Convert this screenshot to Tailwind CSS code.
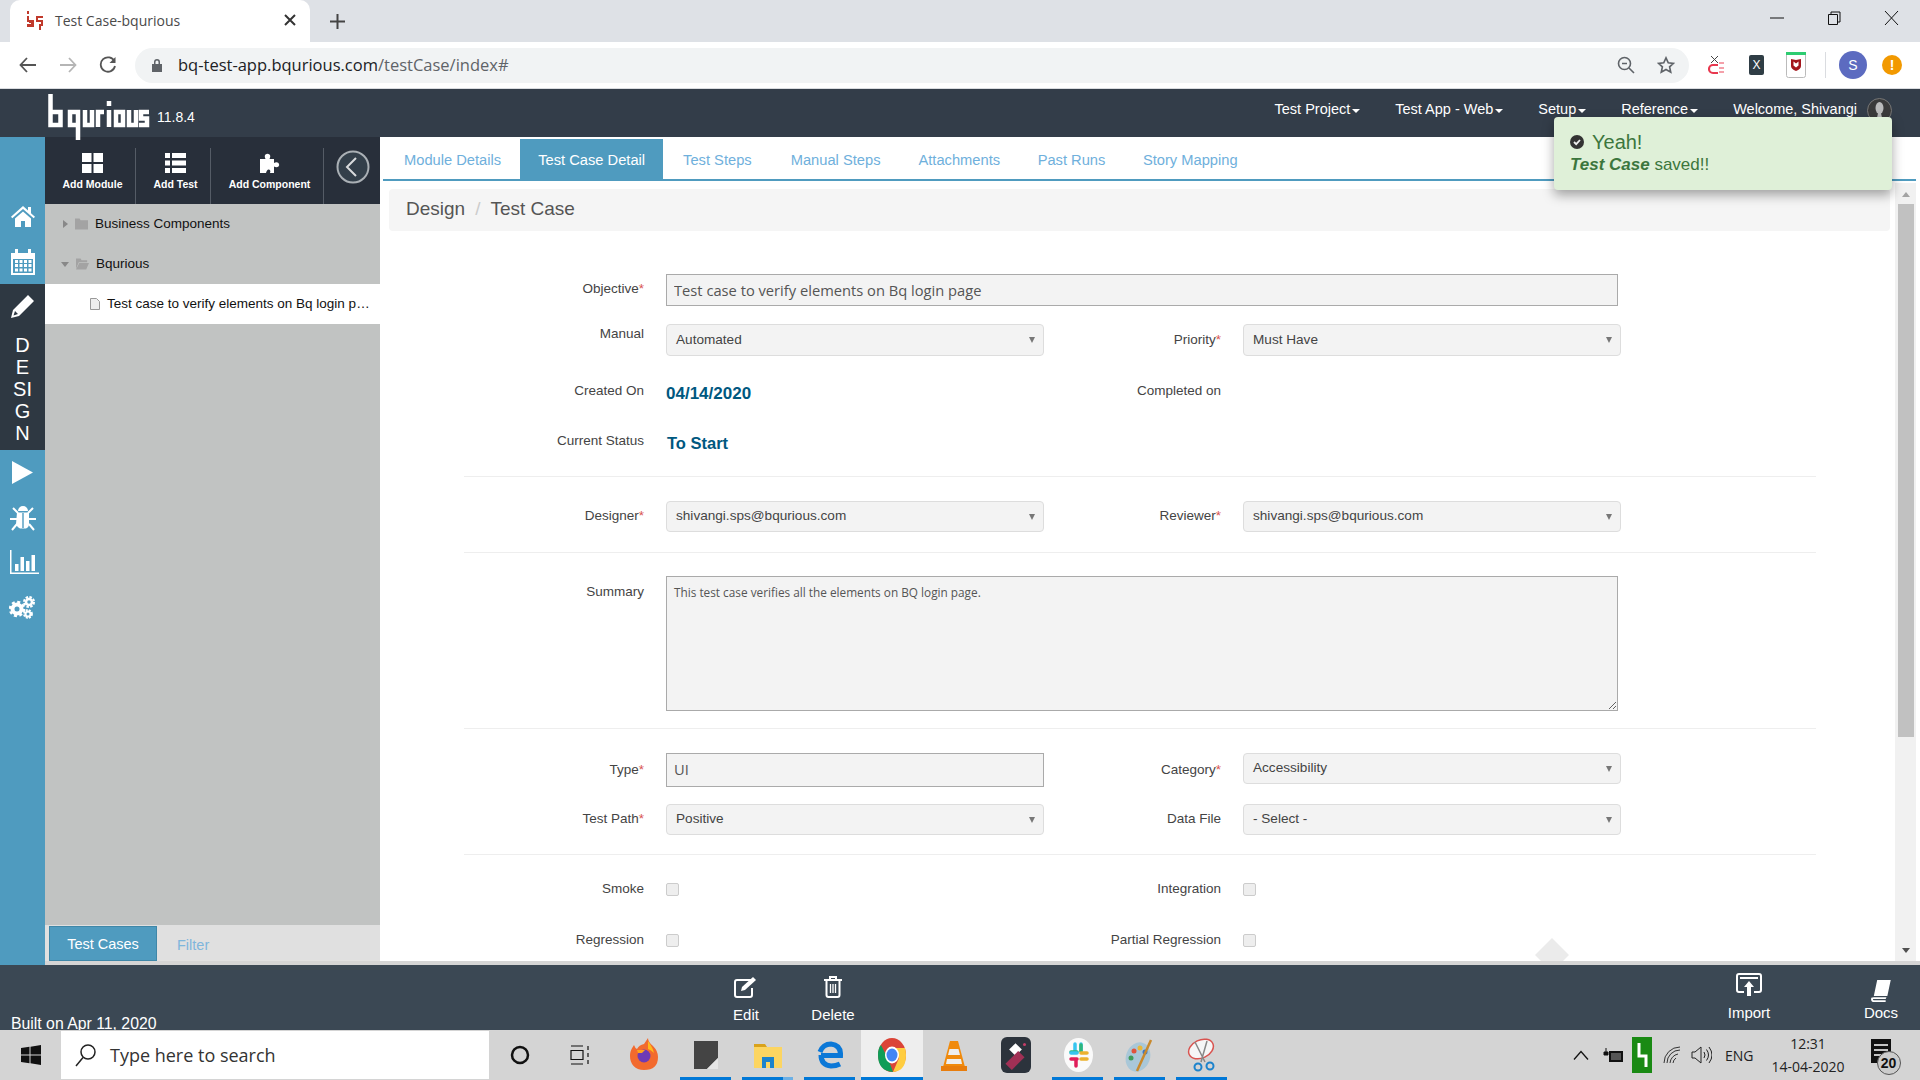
<!DOCTYPE html>
<html lang="en">
  <head>
    <meta charset="UTF-8" />
    <title>Test Case-bqurious</title>
    <script src="https://cdn.jsdelivr.net/npm/@tailwindcss/browser@4"></script>
  </head>
  <body class="overflow-hidden">
    <div class="relative w-[1920px] h-[1080px] flex flex-col overflow-hidden bg-white text-[13.5px] text-[#444] font-['Liberation_Sans',Arial,sans-serif]">
      <!-- browser tab strip -->
      <div class="h-[42px] bg-[#dee1e6] flex items-end relative">
        <div class="ml-[10px] w-[300px] h-[42px] bg-white rounded-t-[10px] flex items-center">
          <svg class="ml-[17px] -mt-[2px]" width="16" height="20" viewBox="0 0 16 20" fill="#c0392b"><path d="M0 1h2v3H0zM0 6h2v4h5v7H0v-3h4v-1H2v-1H0zM9 6h7v2h-5v2h5v6h-2v4h-2v-6h2v-2H9z" /></svg>
          <span class="ml-[12px] -mt-[2px] text-[14px] text-[#4a4a4a] font-['Open_Sans',sans-serif]">Test Case-bqurious</span>
          <svg class="ml-auto mr-[14px] -mt-[2px]" width="12" height="12" viewBox="0 0 12 12" stroke="#333" stroke-width="2"><path d="M1 1l10 10M11 1L1 11" /></svg>
        </div>
        <svg class="ml-[20px] mb-[13px]" width="15" height="15" viewBox="0 0 15 15" stroke="#444" stroke-width="2"><path d="M7.5 0v15M0 7.5h15" /></svg>
        <div class="absolute right-[21px] top-[10px] flex items-center gap-[43px]">
          <svg width="14" height="16" viewBox="0 0 14 16" stroke="#111" stroke-width="1"><path d="M0 8h14" /></svg>
          <svg width="14" height="16" viewBox="0 0 14 16" fill="none" stroke="#111" stroke-width="1"><path d="M1.5 4.5h9v10h-9zM4 4.500V2h9v10h-2.500" /></svg>
          <svg width="15" height="16" viewBox="0 0 15 16" stroke="#111" stroke-width="1"><path d="M1 1l13 14M14 1L1 15" /></svg>
        </div>
      </div>
      <!-- browser toolbar -->
      <div class="h-[47px] bg-white border-b border-[#dadce0] flex items-center shrink-0">
        <svg class="ml-[19px]" width="17" height="16" viewBox="0 0 17 16" fill="none" stroke="#555" stroke-width="1.800"><path d="M17 8H2M8 1L1.500 8 8 15" /></svg>
        <svg class="ml-[24px]" width="17" height="16" viewBox="0 0 17 16" fill="none" stroke="#b5b5b5" stroke-width="1.800"><path d="M0 8h15M9 1l6.500 7L9 15" /></svg>
        <svg class="ml-[22px]" width="18" height="18" viewBox="0 0 18 18" fill="none" stroke="#555" stroke-width="1.800"><path d="M15.500 5.500A7.200 7.200 0 1 0 16 10" /><path d="M16.500 1v6h-6" fill="#555" stroke="none" /></svg>
        <div class="ml-[18px] w-[1554px] h-[35px] rounded-full bg-[#f1f3f4] flex items-center">
          <svg class="ml-[16px]" width="12" height="14" viewBox="0 0 12 14" fill="#5f6368"><path d="M1 6h10v8H1zM3 6V4a3 3 0 0 1 6 0v2H7.500V4a1.500 1.500 0 0 0-3 0v2z" /></svg>
          <span class="ml-[15px] text-[16.500px] text-[#202124] font-['Open_Sans',sans-serif]">bq-test-app.bqurious.com<span class="text-[#5f6368]">/testCase/index#</span></span>
          <svg class="ml-auto" width="18" height="18" viewBox="0 0 18 18" fill="none" stroke="#5f6368" stroke-width="1.600"><circle cx="7.500" cy="7.500" r="6" /><path d="M5 7.500h5M12 12l5 5" /></svg>
          <svg class="ml-[22px] mr-[14px]" width="18" height="18" viewBox="0 0 24 24" fill="none" stroke="#5f6368" stroke-width="2.200"><path d="M12 2.500l3 6.500 7 .8-5.200 4.700 1.500 7-6.300-3.600-6.300 3.600 1.500-7L2 9.800l7-.8z" /></svg>
        </div>
        <svg class="ml-[19px]" width="16" height="20" viewBox="0 0 16 20"><path d="M3 1l7 7M10 1L3 8" stroke="#444" stroke-width="1" /><path d="M10 10H5a3.500 3.500 0 0 0 0 8h5" fill="none" stroke="#e8384f" stroke-width="2.200" /><path d="M11 7h5v2h-5zM11 12h5v2h-5zM11 16h5v2h-5z" fill="#f4a0aa" /></svg>
        <div class="ml-[25px] w-[15px] h-[20px] rounded-[2px] bg-[#2f3d45] text-white text-[12px] leading-[20px] text-center">X</div>
        <svg class="ml-[22px]" width="20" height="26" viewBox="0 0 20 26"><rect x=".5" y=".5" width="19" height="25" rx="2" fill="#fff" stroke="#bbb" /><rect width="20" height="3" fill="#2ecc71" /><path d="M5 7l5 1 5-1v7q0 3-5 5-5-2-5-5z" fill="#a3161d" /><path d="M7.500 9.500l2.500 2 2.500-2v4l-2.500 2-2.500-2z" fill="#fff" /></svg>
        <div class="ml-[19px] w-px h-[26px] bg-[#dadce0]"></div>
        <div class="ml-[13px] w-[28px] h-[28px] rounded-full bg-[#5c6bc0] text-white text-[14px] leading-[28px] text-center">S</div>
        <div class="ml-[15px] w-[20px] h-[20px] rounded-full bg-[#f29900] text-white text-[14px] font-bold leading-[20px] text-center">!</div>
      </div>
      <!-- app header -->
      <div class="h-[48px] shrink-0 bg-[#333d49] flex text-white relative z-10">
        <svg class="ml-[48px] mt-[5px] overflow-visible" width="101" height="46" viewBox="0 0 101 46" fill="none" stroke="#fff" stroke-width="4.500">
          <path d="M2.500 0v31h10V18H4" />
          <path d="M22 18h8v13h-8zM30 31v15" />
          <path d="M37 16v15h7V16" />
          <path d="M50 33V18h6" />
          <path d="M61 16v17M61 7v5" />
          <path d="M68 18h7v13h-7z" />
          <path d="M81 16v15h7V16" />
          <path d="M101 18h-8v6.500h6V31h-8" />
        </svg>
        <span class="ml-[8px] mt-[19px] h-[18px] leading-[18px] text-[14px]">11.8.4</span>
        <div class="ml-auto mr-[28px] flex items-center h-[42px] text-[14.500px] text-white">
          <span>Test Project</span><i class="ml-[2px] mr-[35px] mt-[1px] border-x-[4px] border-x-transparent border-t-[4px] border-t-white"></i>
          <span>Test App - Web</span><i class="ml-[2px] mr-[35px] mt-[1px] border-x-[4px] border-x-transparent border-t-[4px] border-t-white"></i>
          <span>Setup</span><i class="ml-[2px] mr-[35px] mt-[1px] border-x-[4px] border-x-transparent border-t-[4px] border-t-white"></i>
          <span>Reference</span><i class="ml-[2px] mr-[35px] mt-[1px] border-x-[4px] border-x-transparent border-t-[4px] border-t-white"></i>
          <span>Welcome, Shivangi</span>
          <svg class="ml-[10px]" width="25" height="25" viewBox="0 0 25 25"><circle cx="12.500" cy="12.500" r="12" fill="#3a3a3a" stroke="#777" /><ellipse cx="12.500" cy="10" rx="4" ry="6" fill="#bbb" /><path d="M9 25l2-10h3l2 10z" fill="#bbb" /></svg>
        </div>
      </div>
      <!-- middle -->
      <div class="h-[828px] shrink-0 flex">
        <!-- rail -->
        <div class="w-[45px] shrink-0 bg-[#4f9bbf] flex flex-col text-white">
          <div class="h-[147px] shrink-0 pt-[57px] flex flex-col">
            <div class="h-[45px] flex items-center justify-center">
              <svg width="24" height="21" viewBox="0 0 24 21" fill="#fff"><path d="M12 0l5 4.500V1h3v6.200l4 3.600-1.300 1.400L12 3 1.300 12.200 0 10.800zM4 12.500l8-7 8 7V21h-6v-6h-4v6H4z" /></svg>
            </div>
            <div class="h-[45px] flex items-center justify-center">
              <svg width="24" height="26" viewBox="0 0 24 26" fill="#fff"><path d="M0 4h4V0h3v4h10V0h3v4h4v22H0zM2 10v14h20V10z" /><path d="M4 11h3v3H4zM8.500 11h3v3h-3zM13 11h3v3h-3zM17.500 11h3v3h-3zM4 15h3v3H4zM8.500 15h3v3h-3zM13 15h3v3h-3zM17.500 15h3v3h-3zM4 19.500h3v3H4zM8.500 19.500h3v3h-3zM13 19.500h3v3h-3zM17.500 19.500h3v3h-3z" /></svg>
            </div>
          </div>
          <div class="h-[166px] shrink-0 bg-[#2e3842] flex flex-col items-center pt-[10px]">
            <svg width="24" height="24" viewBox="0 0 24 24" fill="#fff"><path d="M17 1l6 6L8 22l-8 2 2-8zM4 17l-1.500 4.500L7 20z" /></svg>
            <div class="mt-[16px] text-[20px] leading-[22px] text-center">D<br />E<br />SI<br />G<br />N</div>
          </div>
          <div class="h-[45px] flex items-center justify-center">
            <svg width="21" height="23" viewBox="0 0 21 23" fill="#fff"><path d="M0 0l21 11.500L0 23z" /></svg>
          </div>
          <div class="h-[45px] flex items-center justify-center">
            <svg width="26" height="26" viewBox="0 0 26 26" fill="#fff"><path d="M8 6a5 5 0 0 1 10 0zM7 7.500h12V19q0 3-3 4.500h-6q-3-1.500-4-4.500zM12.300 8v15h1.400V8z" fill-rule="evenodd" /><path d="M3 3l5 5M23 3l-5 5M0 14h7M26 14h-7M2 25l5-6M24 25l-5-6" stroke="#fff" stroke-width="2" /></svg>
          </div>
          <div class="h-[45px] flex items-center justify-center pl-[2px] pb-[2px]">
            <svg width="30" height="24" viewBox="0 0 30 24" fill="#fff"><path d="M1 0h1.500v22.500H30V24H1z" /><path d="M6 14h3.500v7H6zM11.500 7h3.500v14h-3.500zM17 11h3.500v10H17zM22.500 5H26v16h-3.500z" /></svg>
          </div>
          <div class="h-[45px] flex items-center justify-center pb-[2px]">
            <svg width="27" height="24" viewBox="0 0 27 24" fill="none" stroke="#fff"><circle cx="8" cy="14" r="4.500" stroke-width="4" /><circle cx="8" cy="14" r="7" stroke-width="2.500" stroke-dasharray="3 2.500" /><circle cx="20" cy="7" r="3" stroke-width="2.500" /><circle cx="20" cy="7" r="5" stroke-width="2" stroke-dasharray="2.500 1.400" /><circle cx="19" cy="19" r="2.500" stroke-width="2" /><circle cx="19" cy="19" r="4" stroke-width="1.800" stroke-dasharray="2 1.200" /></svg>
          </div>
        </div>
        <!-- tree sidebar -->
        <div class="w-[335px] shrink-0 flex flex-col bg-[#c1c3c2]">
          <div class="h-[67px] shrink-0 bg-[#282f3a] flex items-end text-white text-[10.500px] font-bold">
            <div class="w-[91px] h-[56px] border-r border-[#555c66] pl-[5px] flex flex-col items-center">
              <svg class="mt-[5px]" width="21" height="20" viewBox="0 0 21 20" fill="#fff"><path d="M0 0h9.500v9H0zM11.500 0H21v9h-9.500zM0 11h9.500v9H0zM11.500 11H21v9h-9.500z" /></svg>
              <span class="mt-[4px] leading-[14px]">Add Module</span>
            </div>
            <div class="w-[75px] h-[56px] border-r border-[#555c66] pl-[5px] flex flex-col items-center">
              <svg class="mt-[5px]" width="21" height="20" viewBox="0 0 21 20" fill="#fff"><path d="M0 0h5v5H0zM7 0h14v5H7zM0 7.500h5v5H0zM7 7.500h14v5H7zM0 15h5v5H0zM7 15h14v5H7z" /></svg>
              <span class="mt-[4px] leading-[14px]">Add Test</span>
            </div>
            <div class="w-[113px] h-[56px] border-r border-[#555c66] pl-[5px] flex flex-col items-center">
              <svg class="mt-[5px]" width="20" height="20" viewBox="0 0 20 20" fill="#fff"><path d="M0 6h5.500Q4 3 5.500 1.500q2-1.500 4 0Q11 3 9.500 6H14v4q2.500-1.500 4.500 0 1.500 2 0 3.500-2 1.500-4.500 0V20h-4q1-3-1-3.500-2-.5-3 3.500H0z" /></svg>
              <span class="mt-[4px] leading-[14px]">Add Component</span>
            </div>
            <div class="flex-1 h-[67px] flex items-center justify-center pl-[2px] pb-[8px]">
              <svg width="34" height="34" viewBox="0 0 34 34" fill="#333f4a" stroke="#aab0b5" stroke-width="2"><circle cx="17" cy="17" r="15.500" /><path d="M20 8l-9 9 9 9" fill="none" stroke="#d8dadc" /></svg>
            </div>
          </div>
          <div class="h-[40px] shrink-0 flex items-center pl-[18px] text-[#111]">
            <i class="border-y-[4px] border-y-transparent border-l-[5px] border-l-[#888]"></i>
            <svg class="ml-[7px]" width="13" height="12" viewBox="0 0 14 12" fill="#a3a3a3"><path d="M0 0h5l1 2h8v10H0z" /></svg>
            <span class="ml-[7px]">Business Components</span>
          </div>
          <div class="h-[40px] shrink-0 flex items-center pl-[16px] text-[#111]">
            <i class="border-x-[4px] border-x-transparent border-t-[5px] border-t-[#888]"></i>
            <svg class="ml-[7px]" width="13" height="12" viewBox="0 0 14 12" fill="#a3a3a3"><path d="M0 0h5l1 2h6v2H3L0 11zM3.500 5H14l-3 7H0z" /></svg>
            <span class="ml-[7px]">Bqurious</span>
          </div>
          <div class="h-[40px] shrink-0 bg-white flex items-center pl-[45px] text-[#111]">
            <svg class="shrink-0" width="10" height="12" viewBox="0 0 10 12" fill="#eee" stroke="#999"><path d="M.500.500h6l3 3v8h-9z" /></svg>
            <span class="ml-[7px] whitespace-nowrap">Test case to verify elements on Bq login p…</span>
          </div>
          <div class="flex-1"></div>
          <div class="h-[36px] shrink-0 bg-[#e0e0e0] flex items-end pl-[4px] text-[14.500px]">
            <div class="w-[108px] h-[35px] pt-[2px] bg-[#4f9bbf] border border-[#3f87a8] text-white flex items-center justify-center">Test Cases</div>
            <span class="ml-[20px] h-[35px] leading-[38px] text-[#7fb6dc]">Filter</span>
          </div>
          <div class="h-[4px] shrink-0 bg-[#d5d5d5]"></div>
        </div>
        <!-- main -->
        <div class="flex-1 min-w-0 flex flex-col">
          <div class="h-[44px] shrink-0 flex items-end ml-[3px] border-b-[2px] border-[#4f9bbf] pl-[2px] mr-[4px] text-[14.700px] text-[#6fb0dc]">
            <span class="h-[38px] px-[19px] leading-[38px]">Module Details</span>
            <span class="h-[40px] px-[18px] leading-[42px] bg-[#4f9bbf] text-white">Test Case Detail</span>
            <span class="h-[38px] px-[20px] leading-[38px]">Test Steps</span>
            <span class="h-[38px] px-[19px] leading-[38px]">Manual Steps</span>
            <span class="h-[38px] px-[19px] leading-[38px]">Attachments</span>
            <span class="h-[38px] px-[18.500px] leading-[38px]">Past Runs</span>
            <span class="h-[38px] px-[19px] leading-[38px]">Story Mapping</span>
          </div>
          <div class="h-[780px] shrink-0 flex relative overflow-hidden">
            <div class="w-[1515px] shrink-0 pt-[8px]">
              <div class="ml-[9px] mr-[5px] h-[42px] rounded-[4px] bg-[#f5f5f5] flex items-center pl-[17px] pb-[2px] text-[19px] text-[#555]">
                <span>Design</span><span class="mx-[10px] text-[#ccc]">/</span><span>Test Case</span>
              </div>
              <form class="ml-[84px] w-[1352px] pt-[43px]">
                <div class="h-[32px] flex items-center">
                  <label class="w-[180px] text-right -mt-[1px]">Objective<span class="text-[#d9534f]">*</span></label>
                  <input class="ml-[22px] w-[952px] h-[32px] border border-[#aaa] bg-[#f3f3f3] px-[7px] text-[14.700px] text-[#555] font-['Open_Sans',sans-serif]" value="Test case to verify elements on Bq login page" />
                </div>
                <div class="mt-[18px] h-[32px] flex items-center">
                  <label class="w-[180px] text-right -mt-[11px]">Manual</label>
                  <div class="ml-[22px] w-[378px] h-[32px] rounded-[4px] border border-[#ddd] bg-[#f3f3f3] flex items-center justify-between pl-[9px] pr-[8px] text-[13.600px] text-[#444]">Automated<i class="border-x-[3.500px] border-x-transparent border-t-[6px] border-t-[#777]"></i></div>
                  <label class="w-[177px] text-right">Priority<span class="text-[#d9534f]">*</span></label>
                  <div class="ml-[22px] w-[378px] h-[32px] rounded-[4px] border border-[#ddd] bg-[#f3f3f3] flex items-center justify-between pl-[9px] pr-[8px] text-[13.600px] text-[#444]">Must Have<i class="border-x-[3.500px] border-x-transparent border-t-[6px] border-t-[#777]"></i></div>
                </div>
                <div class="mt-[19px] h-[32px] flex items-center">
                  <label class="w-[180px] text-right mt-[1px]">Created On</label>
                  <span class="ml-[22px] w-[378px] text-[17px] font-bold text-[#00587f] mt-[5px]">04/14/2020</span>
                  <label class="w-[177px] text-right mt-[1px]">Completed on</label>
                </div>
                <div class="mt-[18px] h-[32px] flex items-center">
                  <label class="w-[180px] text-right mt-[1px]">Current Status</label>
                  <span class="ml-[23px] text-[16.500px] font-bold text-[#00587f] mt-[5px]">To Start</span>
                </div>
                <hr class="mt-[19px] border-[#eee]" />
                <div class="mt-[24px] h-[31px] flex items-center">
                  <label class="w-[180px] text-right">Designer<span class="text-[#d9534f]">*</span></label>
                  <div class="ml-[22px] w-[378px] h-[31px] rounded-[4px] border border-[#ddd] bg-[#f3f3f3] flex items-center justify-between pl-[9px] pr-[8px] text-[13.600px] text-[#444]">shivangi.sps@bqurious.com<i class="border-x-[3.500px] border-x-transparent border-t-[6px] border-t-[#777]"></i></div>
                  <label class="w-[177px] text-right">Reviewer<span class="text-[#d9534f]">*</span></label>
                  <div class="ml-[22px] w-[378px] h-[31px] rounded-[4px] border border-[#ddd] bg-[#f3f3f3] flex items-center justify-between pl-[9px] pr-[8px] text-[13.600px] text-[#444]">shivangi.sps@bqurious.com<i class="border-x-[3.500px] border-x-transparent border-t-[6px] border-t-[#777]"></i></div>
                </div>
                <hr class="mt-[20px] border-[#eee]" />
                <div class="mt-[23px] h-[135px] flex items-start">
                  <label class="w-[180px] text-right mt-[6px]">Summary</label>
                  <textarea class="block ml-[22px] w-[952px] h-[135px] border border-[#aaa] bg-[#f3f3f3] px-[7px] py-[7px] text-[11.800px] text-[#555] font-['Open_Sans',sans-serif]">This test case verifies all the elements on BQ login page.</textarea>
                </div>
                <hr class="mt-[17px] border-[#eee]" />
                <div class="mt-[24px] h-[34px] flex items-center">
                  <label class="w-[180px] text-right">Type<span class="text-[#d9534f]">*</span></label>
                  <input class="ml-[22px] w-[378px] h-[34px] border border-[#aaa] bg-[#f3f3f3] px-[7px] pb-[2px] text-[14.700px] text-[#555] font-['Open_Sans',sans-serif]" value="UI" />
                  <label class="w-[177px] text-right">Category<span class="text-[#d9534f]">*</span></label>
                  <div class="ml-[22px] w-[378px] h-[31px] self-start rounded-[4px] border border-[#ddd] bg-[#f3f3f3] flex items-center justify-between pl-[9px] pr-[8px] text-[13.600px] text-[#444]">Accessibility<i class="border-x-[3.500px] border-x-transparent border-t-[6px] border-t-[#777]"></i></div>
                </div>
                <div class="mt-[17px] h-[31px] flex items-center">
                  <label class="w-[180px] text-right">Test Path<span class="text-[#d9534f]">*</span></label>
                  <div class="ml-[22px] w-[378px] h-[31px] rounded-[4px] border border-[#ddd] bg-[#f3f3f3] flex items-center justify-between pl-[9px] pr-[8px] text-[13.600px] text-[#444]">Positive<i class="border-x-[3.500px] border-x-transparent border-t-[6px] border-t-[#777]"></i></div>
                  <label class="w-[177px] text-right">Data File</label>
                  <div class="ml-[22px] w-[378px] h-[31px] rounded-[4px] border border-[#ddd] bg-[#f3f3f3] flex items-center justify-between pl-[9px] pr-[8px] text-[13.600px] text-[#444]">- Select -<i class="border-x-[3.500px] border-x-transparent border-t-[6px] border-t-[#777]"></i></div>
                </div>
                <hr class="mt-[19px] border-[#eee]" />
                <div class="mt-[19px] h-[30px] flex items-center">
                  <label class="w-[180px] text-right">Smoke</label>
                  <span class="ml-[22px] w-[13px] h-[13px] rounded-[2px] border border-[#ccc] bg-[#eee]"></span>
                  <label class="ml-[365px] w-[177px] text-right">Integration</label>
                  <span class="ml-[22px] w-[13px] h-[13px] rounded-[2px] border border-[#ccc] bg-[#eee]"></span>
                </div>
                <div class="mt-[21px] h-[30px] flex items-center">
                  <label class="w-[180px] text-right">Regression</label>
                  <span class="ml-[22px] w-[13px] h-[13px] rounded-[2px] border border-[#ccc] bg-[#eee]"></span>
                  <label class="ml-[365px] w-[177px] text-right">Partial Regression</label>
                  <span class="ml-[22px] w-[13px] h-[13px] rounded-[2px] border border-[#ccc] bg-[#eee]"></span>
                </div>
              </form>
              <div class="absolute left-[1160px] top-[762px] w-[24px] h-[24px] rotate-45 bg-[#ebebeb]"></div>
            </div>
            <!-- scrollbar -->
            <div class="w-[21px] mt-[2px] shrink-0 bg-[#f1f1f1] flex flex-col items-center">
              <i class="mt-[9px] border-x-[4.500px] border-x-transparent border-b-[5px] border-b-[#a3a3a3]"></i>
              <div class="mt-[7px] w-[16px] h-[533px] bg-[#c1c1c1]"></div>
              <i class="mt-auto mb-[8px] border-x-[4.500px] border-x-transparent border-t-[5px] border-t-[#505050]"></i>
            </div>
          </div>
          <div class="h-[4px] shrink-0 bg-[#d5d5d5]"></div>
        </div>
      </div>
      <!-- app footer -->
      <div class="h-[65px] shrink-0 bg-[#3b4854] flex text-white text-[15px]">
        <span class="ml-[11px] mt-[50px] leading-[18px] w-[144px] text-[15.800px] whitespace-nowrap">Built on Apr 11, 2020</span>
        <div class="ml-[561px] w-[60px] flex flex-col items-center pt-[11px]">
          <svg width="26" height="22" viewBox="0 0 26 22" fill="none" stroke="#fff" stroke-width="2"><path d="M18 4H4Q2 4 2 6v13q0 2 2 2h13q2 0 2-2v-7" /><path d="M8 15l1-4L20 1l3 3-11 10z" fill="#fff" stroke="none" /></svg>
          <span class="mt-[8px] leading-[18px]">Edit</span>
        </div>
        <div class="ml-[27px] w-[60px] flex flex-col items-center pt-[10px]">
          <svg width="20" height="23" viewBox="0 0 20 23" fill="none" stroke="#fff" stroke-width="2"><path d="M1 5h18M7 5V2h6v3M3.500 5v15q0 2 2 2h9q2 0 2-2V5" /><path d="M7.500 9v9M10 9v9M12.500 9v9" stroke-width="1.300" /></svg>
          <span class="mt-[8px] leading-[18px]">Delete</span>
        </div>
        <div class="ml-[856px] w-[60px] flex flex-col items-center pt-[8px]">
          <svg width="26" height="24" viewBox="0 0 26 24" fill="none" stroke="#fff" stroke-width="2"><path d="M8 19H3q-2 0-2-2V3q0-2 2-2h20q2 0 2 2v14q0 2-2 2h-5" /><path d="M4 5h18" /><path d="M13 8l5 6h-3v9h-4v-9H8z" fill="#fff" stroke="none" /></svg>
          <span class="mt-[7px] leading-[18px]">Import</span>
        </div>
        <div class="ml-[72px] w-[60px] flex flex-col items-center pt-[15px]">
          <svg width="22" height="22" viewBox="0 0 23 26" fill="#fff"><path d="M7 0h16l-4 19H3zM3 20.500h15l-1 2H2q0 1.500 1 1.500h14v2H2q-3-1-2-5z" /></svg>
          <span class="mt-[2px] leading-[18px]">Docs</span>
        </div>
      </div>
      <!-- windows taskbar -->
      <div class="h-[50px] shrink-0 bg-[#d4d4d4] flex items-stretch">
        <div class="w-[61px] flex items-center justify-center">
          <svg width="20" height="20" viewBox="0 0 20 20" fill="#111"><path d="M0 3l8.500-1.200V9.500H0zM9.500 1.700L20 0v9.500H9.500zM0 10.500h8.500v7.700L0 17zM9.500 10.500H20V20L9.500 18.300z" /></svg>
        </div>
        <div class="w-[428px] my-[1px] bg-white flex items-center">
          <svg class="ml-[14px]" width="21" height="23" viewBox="0 0 21 23" fill="none" stroke="#222" stroke-width="1.500"><circle cx="13" cy="8" r="7" /><path d="M8 13.500L1 22" /></svg>
          <span class="ml-[14px] text-[18px] text-[#333] font-['Open_Sans',sans-serif]">Type here to search</span>
        </div>
        <div class="w-[62px] flex items-center justify-center">
          <svg width="20" height="20" viewBox="0 0 20 20" fill="none" stroke="#111" stroke-width="2.500"><circle cx="10" cy="10" r="8" /></svg>
        </div>
        <div class="w-[62px] flex items-center justify-center pr-[5px]">
          <svg width="20" height="20" viewBox="0 0 20 20" fill="none" stroke="#111" stroke-width="1.200"><path d="M1 1h12M1 19h12M1 5.500h12v9H1zM18 1v4M18 8v4M18 15v4" /></svg>
        </div>
        <div class="w-[62px] flex items-center justify-center border-b-[3px] border-transparent">
          <svg width="28" height="32" viewBox="0 0 28 32"><path d="M14 32C5 32 0 26 0 18 0 12 3 9 4 7q1 3 3 4 2-4 7-5l4-6q0 4 5 8 5 5 5 11 0 13-14 13z" fill="#f26a2e" /><path d="M18 3q5 7 6 12-3-3-6-4z" fill="#ffb91a" /><circle cx="14" cy="18" r="6.500" fill="#6e3bb5" /><path d="M7 12h8l-3 3H8z" fill="#ffa31a" /></svg>
        </div>
        <div class="relative w-[62px] flex items-center justify-center">
          <svg width="24" height="28" viewBox="0 0 24 28"><path d="M0 0h24v17l-11 11H0z" fill="#444" /><path d="M24 17v11H13z" fill="#e5e5e5" /></svg>
          <div class="absolute left-[5px] bottom-0 w-[51px] h-[3px] bg-[#0078d7]"></div>
        </div>
        <div class="relative w-[62px] flex items-center justify-center">
          <svg width="28" height="26" viewBox="0 0 28 26"><path d="M0 2h11l2 3H0z" fill="#d9a21b" /><path d="M0 5h28v21H0z" fill="#fcd561" /><path d="M8 26V15h12v11h-4v-6h-4v6z" fill="#1c83cc" /></svg>
          <div class="absolute left-[5px] bottom-0 w-[41px] h-[3px] bg-[#0078d7]"></div>
          <div class="absolute left-[46px] bottom-0 w-[10px] h-[3px] bg-[#6cb0e5]"></div>
        </div>
        <div class="relative w-[62px] flex items-center justify-center">
          <svg width="26" height="28" viewBox="0 0 26 28" fill="none" stroke="#0b78d7" stroke-width="5"><path d="M4 14.500h19.500Q24 4 14 3 6 3 3 11M4 14q0 10 10 11 5 0 9-2" /></svg>
          <div class="absolute left-[5px] bottom-0 w-[51px] h-[3px] bg-[#0078d7]"></div>
        </div>
        <div class="relative w-[62px] flex items-center justify-center bg-[#eeeeee]">
          <svg width="28" height="34" viewBox="0 0 28 34"><ellipse cx="14" cy="17" rx="14" ry="17" fill="#db4437" /><path d="M0 17q0-7 3-10l8 16 4 11q-15-1-15-17z" fill="#0f9d58" /><path d="M14 10h13q1 3 1 7 0 16-13 17l6-14z" fill="#ffcd40" /><ellipse cx="14" cy="17" rx="7" ry="8.500" fill="#fff" /><ellipse cx="14" cy="17" rx="5.500" ry="6.500" fill="#4285f4" /></svg>
          <div class="absolute left-0 bottom-0 w-[62px] h-[3px] bg-[#0078d7]"></div>
        </div>
        <div class="w-[62px] flex items-center justify-center">
          <svg width="26" height="32" viewBox="0 0 26 32"><path d="M9 2h8l7 26H2z" fill="#f08a0c" /><path d="M8.500 10h9l1.500 6H7zM6 20h14l1 5H5z" fill="#eee" /><path d="M0 27h26v5H0z" fill="#e87d0d" /></svg>
        </div>
        <div class="w-[62px] flex items-center justify-center">
          <div class="relative w-[30px] h-[36px] rounded-[6px] bg-[#2c333c] overflow-hidden">
            <div class="absolute left-[10px] top-[8px] w-[9px] h-[9px] rotate-45 bg-white"></div>
            <div class="absolute left-[5px] top-[19px] w-[18px] h-[9px] -rotate-45 bg-[#a03055]"></div>
            <div class="absolute left-[22px] top-[6px] w-[3px] h-[3px] rounded-full bg-[#c53d68]"></div>
          </div>
        </div>
        <div class="relative w-[62px] flex items-center justify-center">
          <svg width="29" height="34" viewBox="0 0 29 34"><ellipse cx="14.500" cy="17" rx="14.500" ry="17" fill="#fafafa" /><path d="M11 6v7M17 6v7" stroke="#36c5f0" stroke-width="3.500" stroke-linecap="round" /><path d="M17 7v6M7 14h6" stroke="#2eb67d" stroke-width="3.500" stroke-linecap="round" /><path d="M7 15h6" stroke="#36c5f0" stroke-width="3.500" stroke-linecap="round" /><path d="M17 15h6M17 21h6" stroke="#ecb22e" stroke-width="3.500" stroke-linecap="round" /><path d="M7 21h6M12 21v7" stroke="#e01e5a" stroke-width="3.500" stroke-linecap="round" /></svg>
          <div class="absolute left-[5px] bottom-0 w-[51px] h-[3px] bg-[#0078d7]"></div>
        </div>
        <div class="relative w-[62px] flex items-center justify-center">
          <svg width="30" height="36" viewBox="0 0 30 36"><ellipse cx="13" cy="20" rx="12" ry="15" fill="#a9c7d8" transform="rotate(20 13 20)" /><circle cx="9" cy="14" r="2.500" fill="#e1533c" /><circle cx="15" cy="11" r="2.500" fill="#e8b73a" /><circle cx="6" cy="21" r="2.500" fill="#3f9c59" /><circle cx="20" cy="15" r="2.500" fill="#3b79c7" /><path d="M26 3L12 34" stroke="#c9892c" stroke-width="2.500" /></svg>
          <div class="absolute left-[5px] bottom-0 w-[51px] h-[3px] bg-[#0078d7]"></div>
        </div>
        <div class="relative w-[62px] flex items-center justify-center">
          <svg width="30" height="36" viewBox="0 0 30 36" fill="none"><ellipse cx="14" cy="12" rx="13" ry="9" stroke="#d9534f" stroke-width="1.500" transform="rotate(-25 14 12)" fill="#f6f6f6" /><path d="M8 5l10 20M20 4L14 25" stroke="#888" stroke-width="1.500" /><circle cx="11" cy="30" r="3.500" stroke="#1c83cc" stroke-width="2" /><circle cx="23" cy="29" r="3.500" stroke="#1c83cc" stroke-width="2" /></svg>
          <div class="absolute left-[5px] bottom-0 w-[51px] h-[3px] bg-[#0078d7]"></div>
        </div>
        <!-- tray -->
        <div class="ml-[340px] flex items-center">
          <svg width="16" height="10" viewBox="0 0 16 10" fill="none" stroke="#111" stroke-width="1.300"><path d="M1 9.500l7-8 7 8" /></svg>
          <svg class="ml-[14px]" width="20" height="15" viewBox="0 0 20 15"><path d="M3 0v4M1 4h4v3H1z" stroke="#111" fill="#111" /><path d="M6 3h14v11H6z" fill="#111" /><path d="M8 5h10v7H8z" fill="#555" /></svg>
          <div class="ml-[9px] w-[20px] h-[36px] bg-[#1a8a14] flex items-center justify-center">
            <svg width="12" height="24" viewBox="0 0 12 24" fill="none" stroke="#fff" stroke-width="3"><path d="M3 0v13h7v11" /></svg>
          </div>
          <svg class="ml-[11px]" width="18" height="18" viewBox="0 0 18 18" fill="none" stroke="#333" stroke-width="1"><path d="M1 17A16 16 0 0 1 17 1M4 17A13 13 0 0 1 17 4M7 17A10 10 0 0 1 15 8M10 17a7 7 0 0 1 3-5" /></svg>
          <svg class="ml-[10px]" width="21" height="20" viewBox="0 0 21 20" fill="none" stroke="#222" stroke-width="1"><path d="M1 7h3l6-5v16l-6-5H1zM13 7q2 3 0 6M15.500 4.500q4 5.500 0 11M18 2q6 8 0 16" /></svg>
          <span class="ml-[13px] text-[14px] text-[#222] font-['Open_Sans',sans-serif]">ENG</span>
          <div class="ml-[17px] w-[75px] text-center text-[14px] leading-[23px] text-[#222] font-['Open_Sans',sans-serif]">12:31<br />14-04-2020</div>
          <div class="relative ml-[25px] w-[24px] h-[26px] -mt-[6px]">
            <svg width="20" height="26" viewBox="0 0 20 26"><path d="M0 0h20v24H0z" fill="#111" /><path d="M3 6h14M3 11h14M3 16h10" stroke="#fff" stroke-width="1.500" /></svg>
            <div class="absolute left-[6px] top-[12px] w-[24px] h-[24px] rounded-full border border-[#555] bg-[#ccc] text-[14px] font-bold leading-[22px] text-center text-[#111]">20</div>
          </div>
        </div>
      </div>
      <!-- toast -->
      <div class="absolute left-[1554px] top-[117px] w-[338px] h-[73px] rounded-[4px] bg-[#dff0d8] shadow-[0_5px_12px_rgba(0,0,0,0.35)] z-20 pl-[16px] text-[#3c763d]">
        <div class="flex items-center h-[20px] mt-[15px]">
          <svg width="14" height="14" viewBox="0 0 14 14"><circle cx="7" cy="7" r="7" fill="#333" /><path d="M4 7l2.200 2.200L10 5" fill="none" stroke="#eee" stroke-width="1.800" /></svg>
          <span class="ml-[8px] text-[20px]">Yeah!</span>
        </div>
        <div class="mt-[3px] text-[17px] leading-[20px]"><b class="italic">Test Case</b> saved!!</div>
      </div>
    </div>
  </body>
</html>
